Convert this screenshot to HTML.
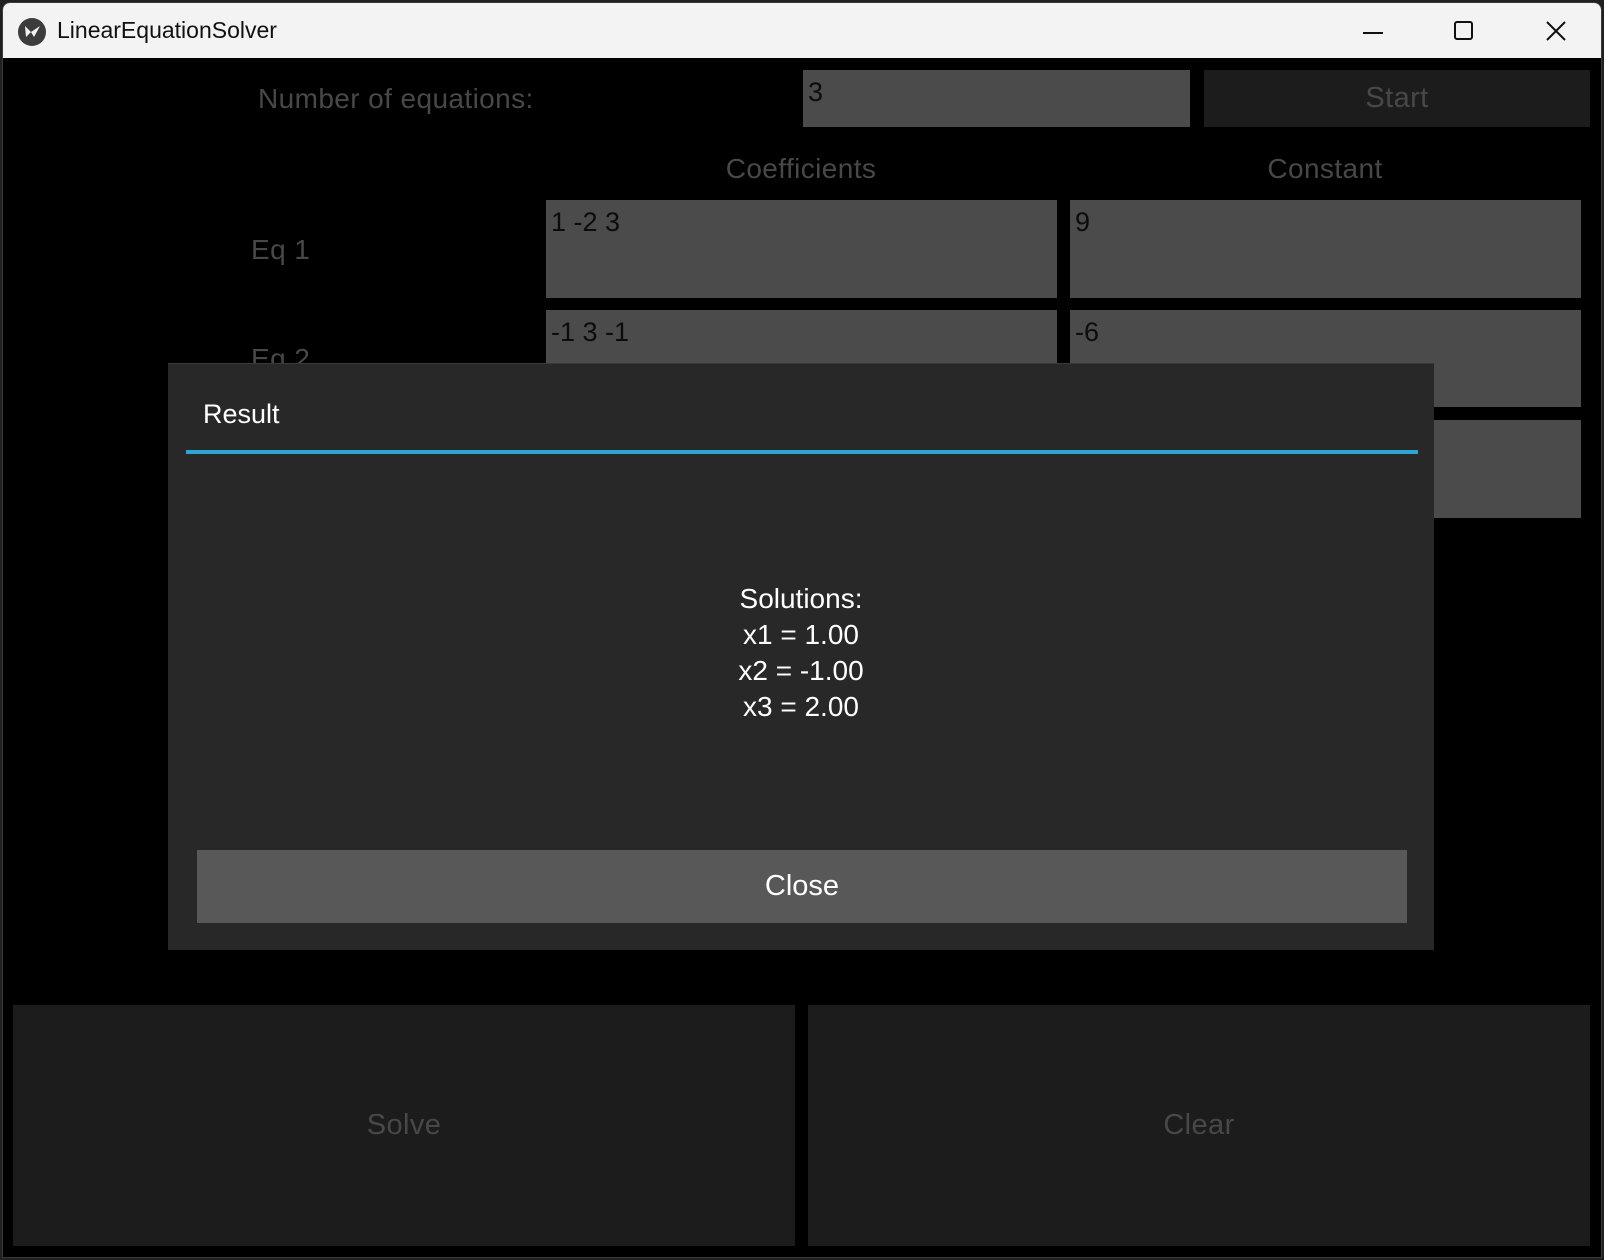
<!DOCTYPE html>
<html><head><meta charset="utf-8"><style>
*{margin:0;padding:0;box-sizing:border-box}
body{width:1604px;height:1260px;background:#202020;position:relative;overflow:hidden;font-family:"Liberation Sans","DejaVu Sans",sans-serif}
.a{position:absolute}
.win{left:2px;top:2px;width:1600px;height:1256px;background:#000;border:1px solid #3a3a3a;border-radius:8px 8px 0 0;overflow:hidden}
.tb{left:0;top:0;width:1600px;height:55px;background:#f3f3f3}
.lbl{color:#484848;font-size:28px;white-space:nowrap;letter-spacing:0.4px}
.inp{background:#4b4b4b;color:#0c0c0c;font-size:27px;padding:7px 5px}
.btn{background:#1c1c1c;color:#484848;font-size:29px;display:flex;align-items:center;justify-content:center;letter-spacing:0.4px}
</style></head><body>
<div class="a win">
 <div class="a tb">
  <div class="a" style="left:15px;top:15px;width:28px;height:28px;border-radius:50%;background:#3c3c3c"></div>
  <svg class="a" style="left:19px;top:21px" width="20" height="16" viewBox="0 0 20 16"><path d="M3 2 L9 8 L4 13 Z M9 8 L18 2 L12 13 Z" fill="#f3f3f3"/></svg>
  <div class="a" style="left:54px;top:14px;font-size:23px;color:#111">LinearEquationSolver</div>
  <div class="a" style="left:1360px;top:29px;width:20px;height:2px;background:#111"></div>
  <div class="a" style="left:1451px;top:18px;width:19px;height:19px;border:2px solid #111;border-radius:3px"></div>
  <svg class="a" style="left:1542px;top:17px" width="22" height="22" viewBox="0 0 22 22"><path d="M2 2 L20 20 M20 2 L2 20" stroke="#111" stroke-width="2"/></svg>
 </div>
</div>
<div class="a lbl" style="left:258px;top:83px">Number of equations:</div>
<div class="a inp" style="left:803px;top:70px;width:387px;height:57px">3</div>
<div class="a btn" style="left:1204px;top:70px;width:386px;height:57px">Start</div>
<div class="a lbl" style="left:646px;top:153px;width:310px;text-align:center">Coefficients</div>
<div class="a lbl" style="left:1170px;top:153px;width:310px;text-align:center">Constant</div>
<div class="a lbl" style="left:251px;top:234px">Eq 1</div>
<div class="a lbl" style="left:251px;top:343px">Eq 2</div>
<div class="a inp" style="left:546px;top:200px;width:511px;height:98px">1 -2 3</div>
<div class="a inp" style="left:1070px;top:200px;width:511px;height:98px">9</div>
<div class="a inp" style="left:546px;top:310px;width:511px;height:97px">-1 3 -1</div>
<div class="a inp" style="left:1070px;top:310px;width:511px;height:97px">-6</div>
<div class="a inp" style="left:546px;top:420px;width:511px;height:98px"></div>
<div class="a inp" style="left:1070px;top:420px;width:511px;height:98px"></div>
<div class="a btn" style="left:13px;top:1005px;width:782px;height:241px">Solve</div>
<div class="a btn" style="left:808px;top:1005px;width:782px;height:241px">Clear</div>
<div class="a" style="left:168px;top:363px;width:1266px;height:587px;background:#282828;border-top:1px solid #3a3a3a">
 <div class="a" style="left:35px;top:35px;font-size:27px;color:#fff">Result</div>
 <div class="a" style="left:18px;top:86px;width:1232px;height:4px;background:#2fa4d2"></div>
 <div class="a" style="left:0;top:217px;width:1266px;text-align:center;color:#fff;font-size:28px;line-height:36px">Solutions:<br>x1 = 1.00<br>x2 = -1.00<br>x3 = 2.00</div>
 <div class="a" style="left:29px;top:486px;width:1210px;height:73px;background:#585858;color:#fff;font-size:29px;display:flex;align-items:center;justify-content:center">Close</div>
</div>
</body></html>
